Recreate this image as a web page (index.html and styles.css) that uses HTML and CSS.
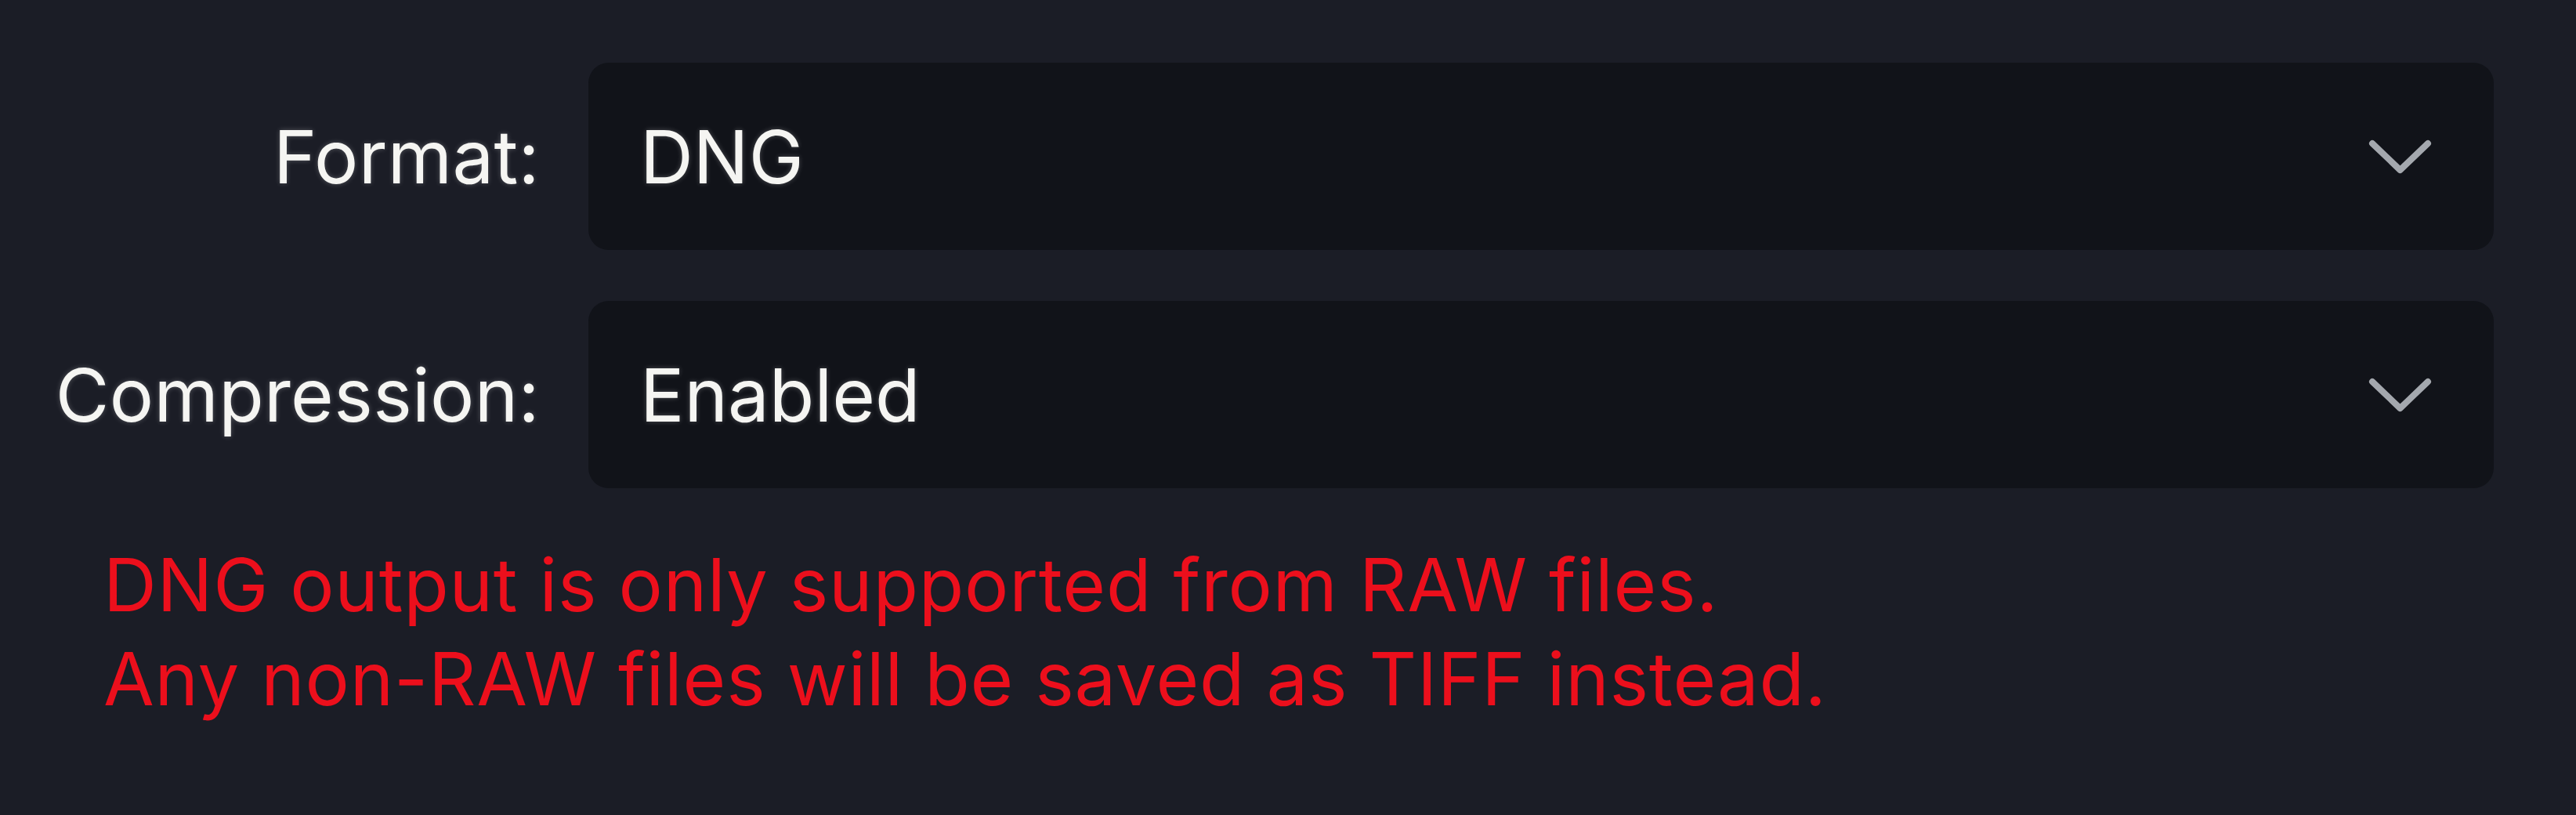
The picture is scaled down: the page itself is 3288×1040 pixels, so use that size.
FILE: index.html
```html
<!DOCTYPE html>
<html lang="en">
<head>
  <meta charset="UTF-8">
  <title>Export Settings</title>
  <link rel="stylesheet" href="styles.css">
</head>
<body>
  <div class="panel">
    <div class="settings">
      <label class="label" for="format">Format:</label>
      <div class="select" id="format">
        <span class="value">DNG</span>
        <svg class="chevron" viewBox="0 0 81 44"><polyline points="5,5 40.5,39 76,5"/></svg>
      </div>

      <label class="label" for="compression">Compression:</label>
      <div class="select" id="compression">
        <span class="value">Enabled</span>
        <svg class="chevron" viewBox="0 0 81 44"><polyline points="5,5 40.5,39 76,5"/></svg>
      </div>
    </div>

    <p class="warning">DNG output is only supported from RAW files.<br>Any non-RAW files will be saved as TIFF instead.</p>
  </div>
</body>
</html>
```
FILE: styles.css
```css
body {
  margin: 0;
  background-color: #1b1d26;
  font-family: Inter, "Noto Sans", sans-serif;
  height: 1040px;
  overflow: hidden;
}
.panel {
  padding: 80px 105px 0 70px;
}
.settings {
  display: grid;
  grid-template-columns: 619px 1fr;
  column-gap: 62px;
  row-gap: 65px;
}
.label {
  display: flex;
  align-items: center;
  justify-content: flex-end;
  color: #f5f5f2;
  font-size: 94px;
  letter-spacing: 0.3px;
  white-space: nowrap;
  text-shadow: 0 0 6px rgba(255, 255, 255, 0.25);
}
.select {
  height: 239px;
  display: flex;
  align-items: center;
  justify-content: space-between;
  padding: 0 79px 0 66px;
  background-color: #111319;
  border-radius: 26px;
}
.value {
  color: #f5f5f2;
  font-size: 94px;
  text-shadow: 0 0 6px rgba(255, 255, 255, 0.25);
}
.chevron {
  width: 81px;
  height: 44px;
  fill: none;
  stroke: #a4a8ae;
  stroke-width: 8;
  stroke-linecap: round;
  stroke-linejoin: round;
}
.warning {
  margin: 63px 0 0 62px;
  color: #ec0f1c;
  font-size: 94px;
  letter-spacing: 0.75px;
  line-height: 120px;
}
```
